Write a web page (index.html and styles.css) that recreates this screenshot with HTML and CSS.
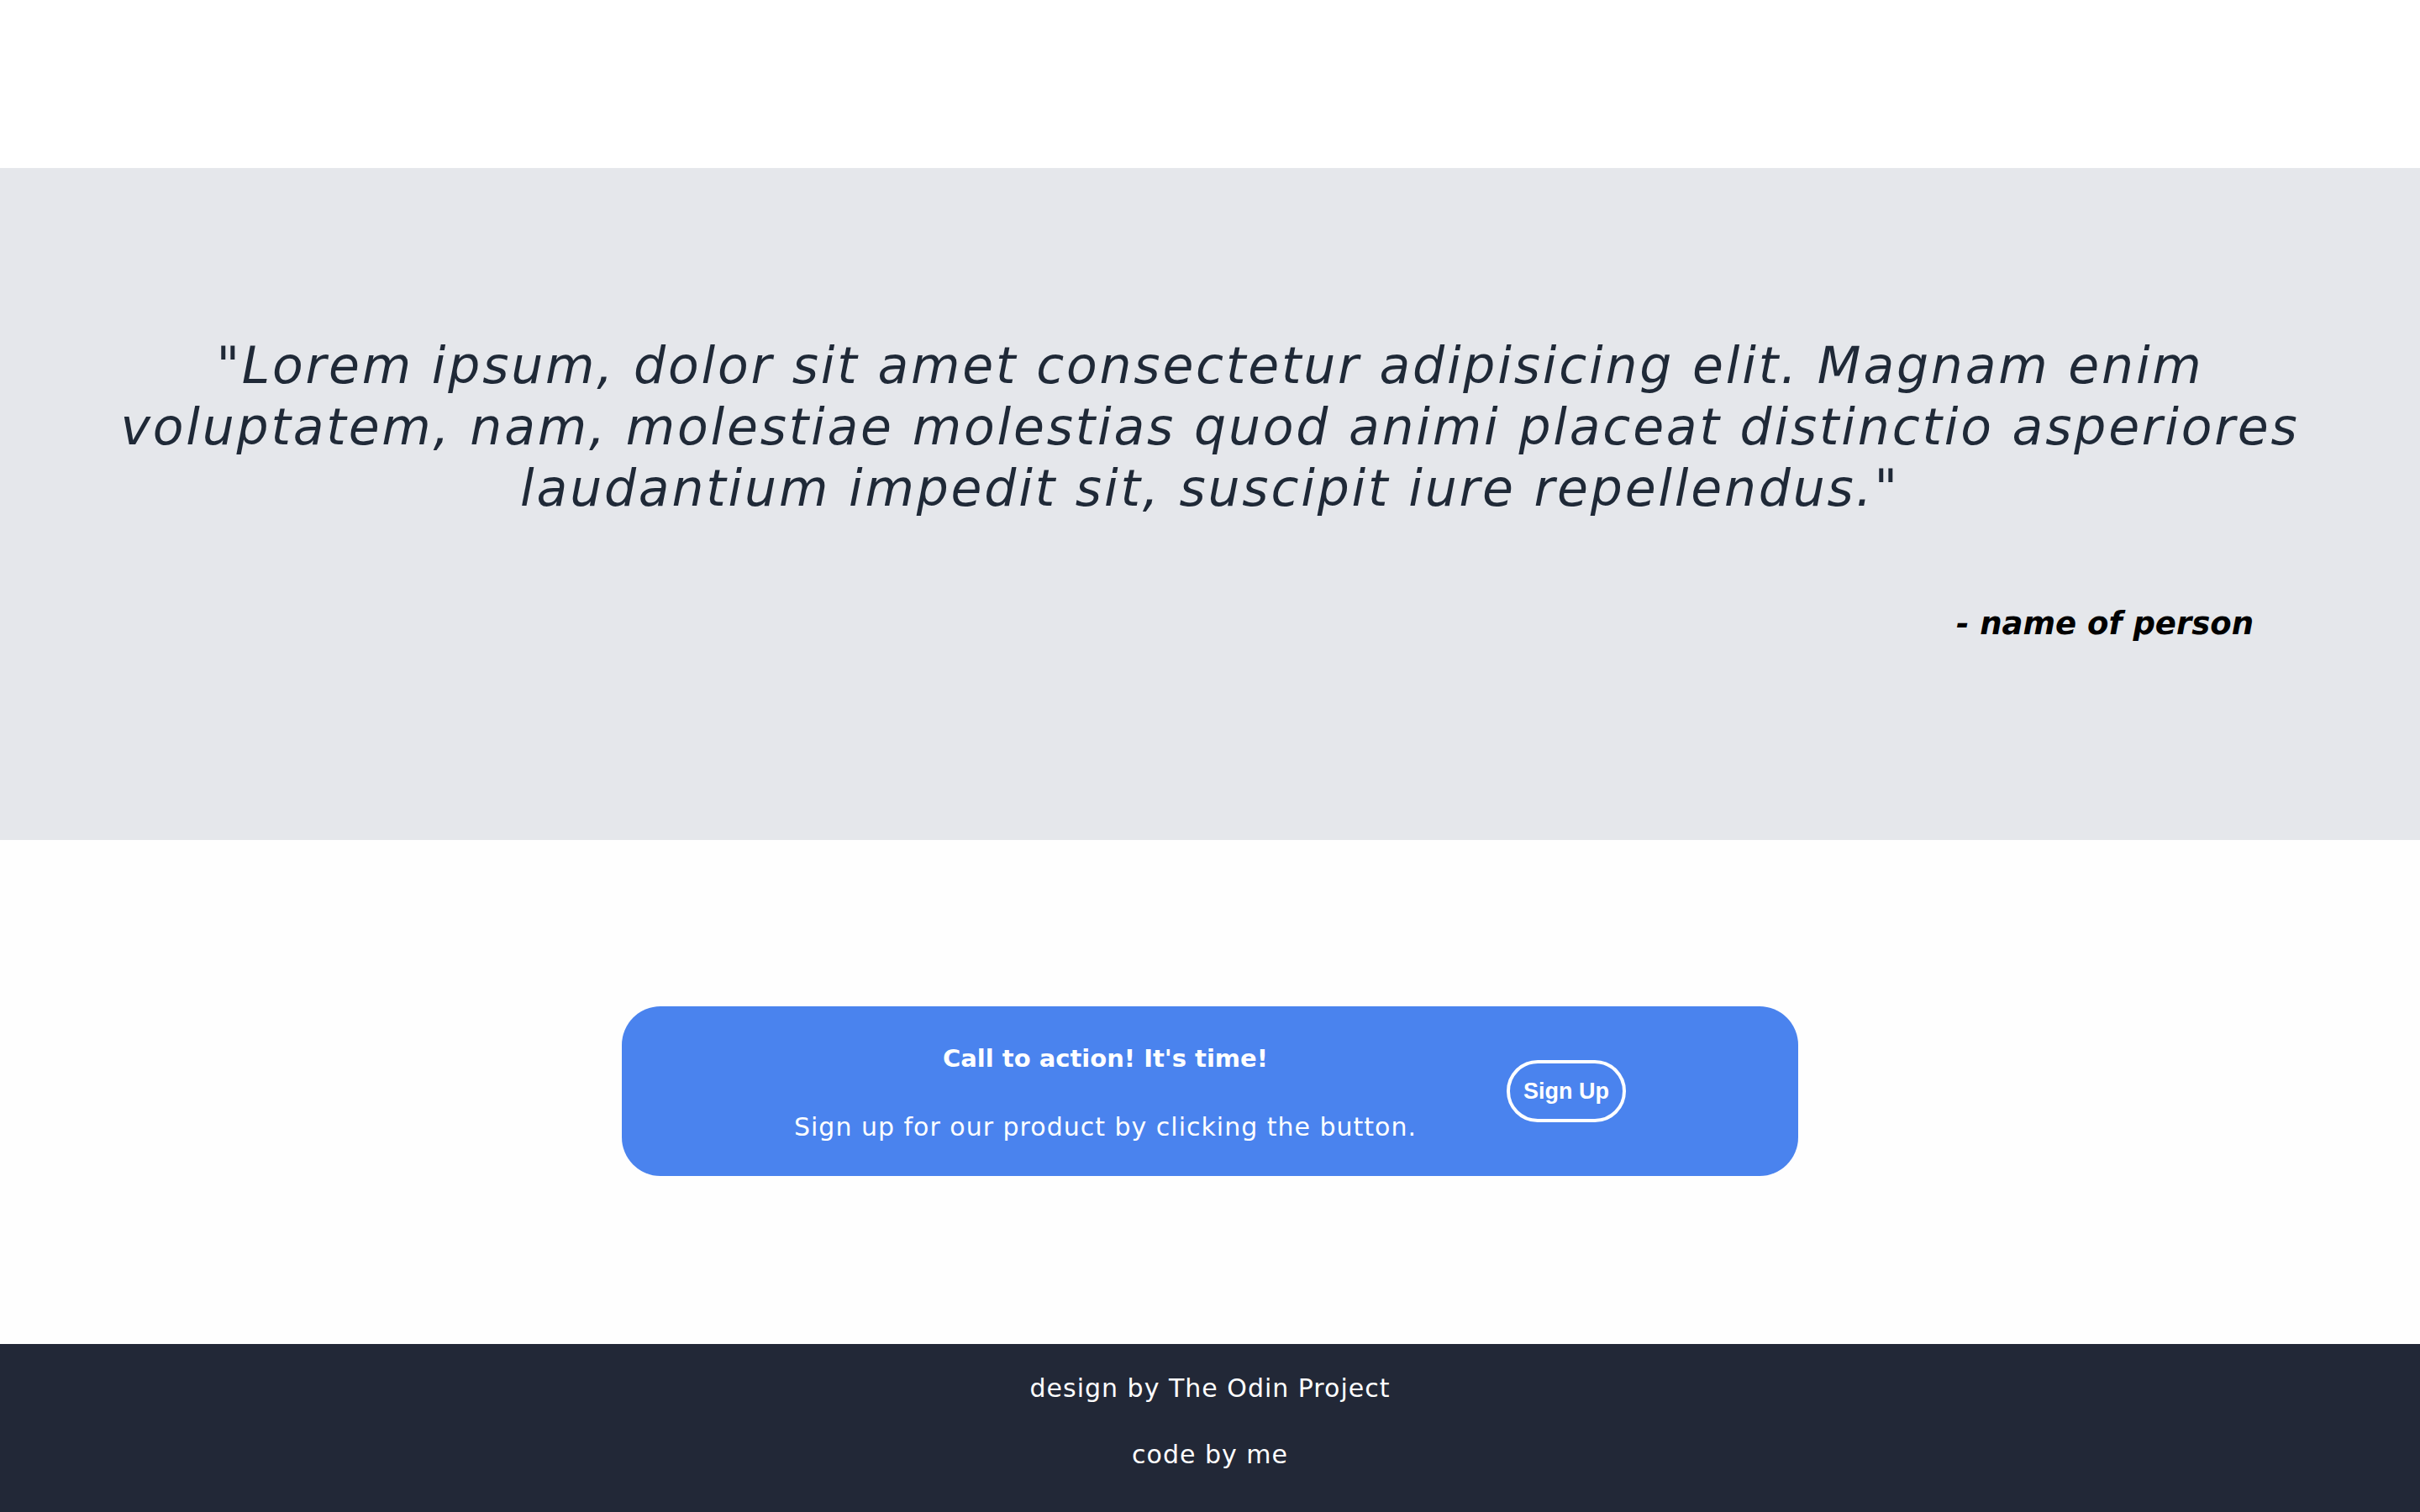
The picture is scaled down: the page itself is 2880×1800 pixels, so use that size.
FILE: index.html
```html
<!DOCTYPE html>
<html lang="en">
<head>
<meta charset="utf-8">
<title>Landing</title>
<link rel="stylesheet" href="styles.css">
</head>
<body>
<div class="top"></div>
<section class="quote-band">
  <p class="quote">"Lorem ipsum, dolor sit amet consectetur adipisicing elit. Magnam enim voluptatem, nam, molestiae molestias quod animi placeat distinctio asperiores laudantium impedit sit, suscipit iure repellendus."</p>
  <p class="author">- name of person</p>
</section>
<section class="cta-section">
  <div class="cta">
    <div class="cta-text">
      <h3 class="cta-title">Call to action! It's time!</h3>
      <p class="cta-sub">Sign up for our product by clicking the button.</p>
    </div>
    <button class="cta-btn">Sign Up</button>
  </div>
</section>
<footer class="footer">
  <p class="foot-line">design by The Odin Project</p>
  <p class="foot-line">code by me</p>
</footer>
</body>
</html>
```
FILE: styles.css
```css
html, body {
  margin: 0;
  padding: 0;
  background: #fefefe;
  font-family: "DejaVu Sans", "Open Sans", sans-serif;
}

.top {
  height: 200px;
  background: #ffffff;
}

.quote-band {
  background: #e5e7eb;
  height: 800px;
  box-sizing: border-box;
  padding: 199px 128px 0;
}

.quote {
  margin: 0;
  text-align: center;
  font-style: italic;
  font-size: 60px;
  line-height: 73px;
  letter-spacing: 2.8px;
  color: #1f2937;
}

.author {
  margin: 103px 70px 0 0;
  text-align: right;
  font-style: italic;
  font-weight: 700;
  font-size: 37px;
  line-height: 44px;
  color: #000;
}

.cta-section {
  padding: 198px 0 200px;
  display: flex;
  justify-content: center;
}

.cta {
  width: 1400px;
  height: 202px;
  box-sizing: border-box;
  background: #4a83ee;
  border-radius: 46px;
  display: flex;
  align-items: center;
  justify-content: center;
  gap: 107px;
  color: #fff;
}

.cta-text {
  text-align: center;
  padding-top: 4px;
}

.cta-title {
  margin: 0;
  font-size: 29px;
  font-weight: 700;
  line-height: 40px;
}

.cta-sub {
  margin: 42px 0 0;
  font-size: 30px;
  line-height: 40px;
  letter-spacing: 1px;
}

.cta-btn {
  width: 142px;
  height: 74px;
  box-sizing: border-box;
  border: 4px solid #fff;
  border-radius: 37px;
  background: transparent;
  color: #fff;
  font-family: "Liberation Sans", Arial, sans-serif;
  font-weight: 700;
  font-size: 27px;
  padding: 0;
}

.footer {
  background: #222837;
  height: 200px;
  box-sizing: border-box;
  padding-top: 33px;
  color: #fff;
  text-align: center;
}

.foot-line {
  margin: 0 0 39px;
  font-size: 30px;
  line-height: 40px;
  letter-spacing: 1px;
}
```
